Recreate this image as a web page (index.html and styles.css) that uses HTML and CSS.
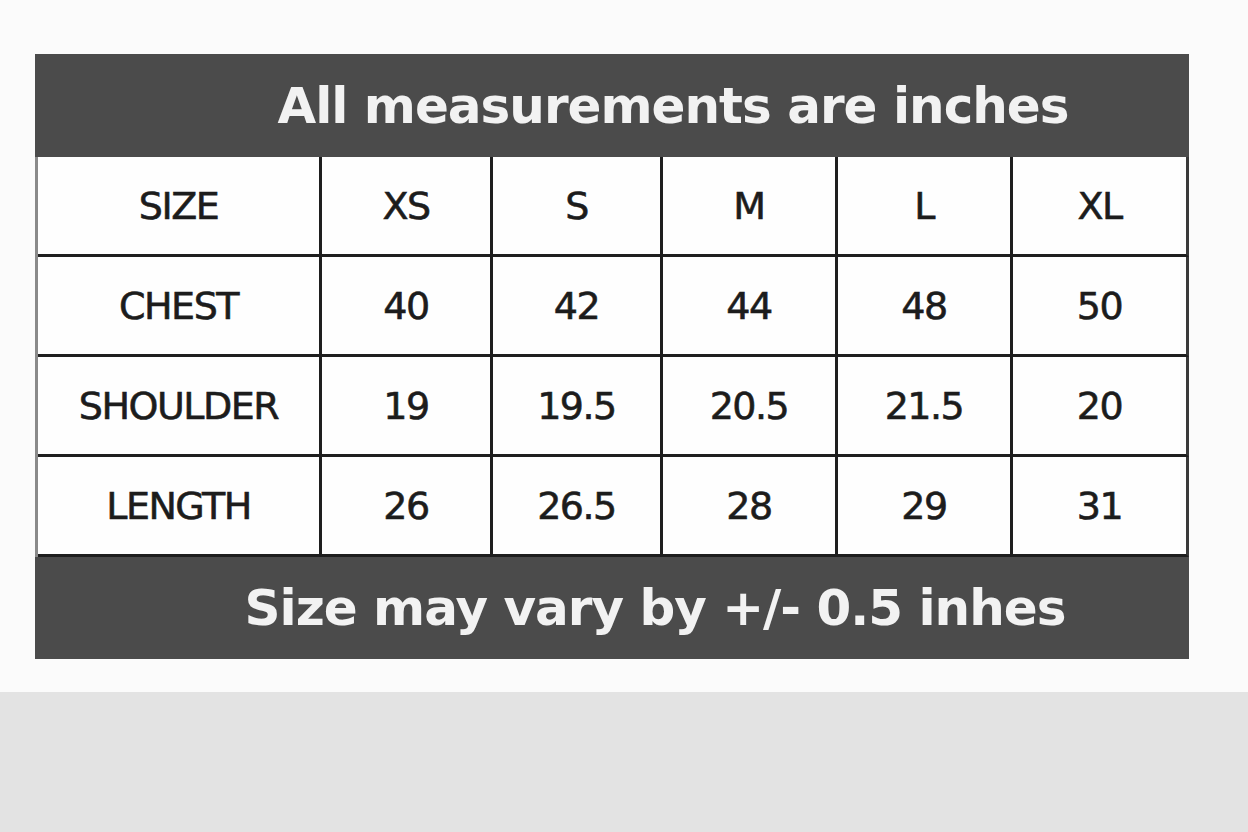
FILE: index.html
```html
<!DOCTYPE html>
<html lang="en">
<head>
<meta charset="utf-8">
<title>Size chart</title>
<link rel="stylesheet" href="styles.css">
</head>
<body>
<main class="page">
  <section class="chart">
    <div class="band band-top"><span class="band-text title">All measurements are inches</span></div>
    <div class="grid">
      <div class="cell first">SIZE</div><div class="cell">XS</div><div class="cell">S</div><div class="cell">M</div><div class="cell">L</div><div class="cell last">XL</div>
      <div class="cell first">CHEST</div><div class="cell">40</div><div class="cell">42</div><div class="cell">44</div><div class="cell">48</div><div class="cell last">50</div>
      <div class="cell first">SHOULDER</div><div class="cell">19</div><div class="cell">19.5</div><div class="cell">20.5</div><div class="cell">21.5</div><div class="cell last">20</div>
      <div class="cell first">LENGTH</div><div class="cell">26</div><div class="cell">26.5</div><div class="cell">28</div><div class="cell">29</div><div class="cell last">31</div>
    </div>
    <div class="band band-bottom"><span class="band-text note">Size may vary by +/- 0.5 inhes</span></div>
  </section>
</main>
<div class="footer-strip"></div>
</body>
</html>
```
FILE: styles.css
```css
html, body {
  margin: 0;
  padding: 0;
}
body {
  background: #e3e3e3;
  font-family: "DejaVu Sans", "Liberation Sans", sans-serif;
}
.page {
  background: #fbfbfb;
  height: 692px;
  padding: 54px 0 0 35px;
  box-sizing: border-box;
}
.chart {
  width: 1154px;
  background: #4b4b4b;
}
.band {
  height: 103px;
  display: flex;
  align-items: center;
  justify-content: center;
  color: #f2f2f2;
  font-weight: bold;
}
.band-top {
  padding-left: 122px;
  box-sizing: border-box;
}
.band-bottom {
  height: 102px;
  padding-left: 86px;
  box-sizing: border-box;
}
.title {
  font-size: 50px;
  letter-spacing: -1px;
}
.note {
  font-size: 50px;
  letter-spacing: -1px;
}
.grid {
  display: grid;
  grid-template-columns: 284px 171px 170px 175px 175px 176px;
  grid-auto-rows: 100px;
  width: 1154px;
  box-sizing: border-box;
  background: #1e1e1e;
  border-left: 3px solid #8a8a8a;
}
.cell {
  background: #fefefe;
  display: flex;
  align-items: center;
  justify-content: center;
  font-size: 38px;
  letter-spacing: -1.5px;
  color: #1c1c1c;
  -webkit-text-stroke: 0.6px #1c1c1c;
  border-right: 3px solid #1e1e1e;
  border-bottom: 3px solid #1e1e1e;
  box-sizing: border-box;
}
.cell.last {
  border-right: 3px solid #3a3a3a;
}
.footer-strip {
  height: 140px;
  background: #e3e3e3;
}
```
